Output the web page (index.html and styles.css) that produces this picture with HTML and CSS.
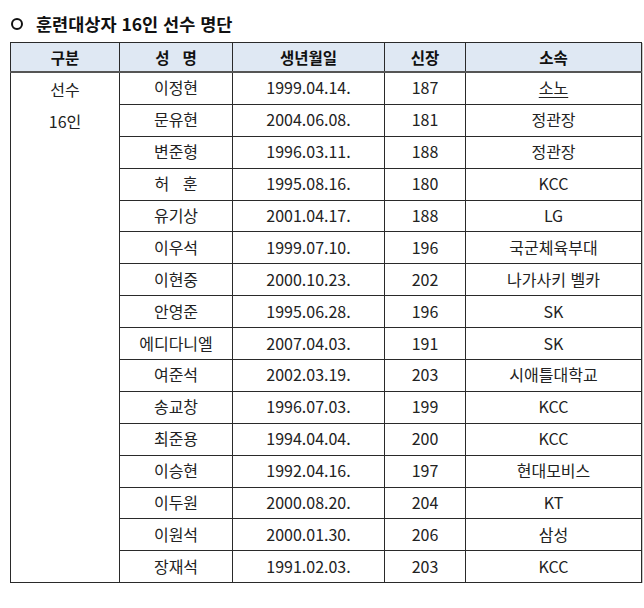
FILE: index.html
```html
<!DOCTYPE html>
<html lang="ko">
<head>
<meta charset="utf-8">
<link rel="stylesheet" href="styles.css">
</head>
<body>
<div class="page">
  <h1 class="title"><span class="bullet"></span>훈련대상자 16인 선수 명단</h1>
  <table class="roster">
    <colgroup>
      <col class="c1"><col class="c2"><col class="c3"><col class="c4"><col class="c5">
    </colgroup>
    <thead>
      <tr><th>구분</th><th>성&nbsp;&nbsp;&nbsp;명</th><th>생년월일</th><th>신장</th><th>소속</th></tr>
    </thead>
    <tbody>
      <tr><td rowspan="16" class="group"><div>선수</div><div>16인</div></td><td>이정현</td><td>1999.04.14.</td><td>187</td><td><span class="ul">소노</span></td></tr>
      <tr><td>문유현</td><td>2004.06.08.</td><td>181</td><td>정관장</td></tr>
      <tr><td>변준형</td><td>1996.03.11.</td><td>188</td><td>정관장</td></tr>
      <tr><td>허&nbsp;&nbsp;&nbsp;훈</td><td>1995.08.16.</td><td>180</td><td>KCC</td></tr>
      <tr><td>유기상</td><td>2001.04.17.</td><td>188</td><td>LG</td></tr>
      <tr><td>이우석</td><td>1999.07.10.</td><td>196</td><td>국군체육부대</td></tr>
      <tr><td>이현중</td><td>2000.10.23.</td><td>202</td><td>나가사키 벨카</td></tr>
      <tr><td>안영준</td><td>1995.06.28.</td><td>196</td><td>SK</td></tr>
      <tr><td>에디다니엘</td><td>2007.04.03.</td><td>191</td><td>SK</td></tr>
      <tr><td>여준석</td><td>2002.03.19.</td><td>203</td><td>시애틀대학교</td></tr>
      <tr><td>송교창</td><td>1996.07.03.</td><td>199</td><td>KCC</td></tr>
      <tr><td>최준용</td><td>1994.04.04.</td><td>200</td><td>KCC</td></tr>
      <tr><td>이승현</td><td>1992.04.16.</td><td>197</td><td>현대모비스</td></tr>
      <tr><td>이두원</td><td>2000.08.20.</td><td>204</td><td>KT</td></tr>
      <tr><td>이원석</td><td>2000.01.30.</td><td>206</td><td>삼성</td></tr>
      <tr><td>장재석</td><td>1991.02.03.</td><td>203</td><td>KCC</td></tr>
    </tbody>
  </table>
</div>
</body>
</html>
```
FILE: styles.css
```css
html, body {
  margin: 0;
  padding: 0;
  background: #fff;
}
.page {
  padding: 12px 0 0 10px;
  font-family: "Noto Sans CJK KR", "Noto Sans", sans-serif;
  color: #222;
}
.title {
  margin: 0 0 7px 0;
  font-size: 17.5px;
  line-height: 23px;
  font-weight: 700;
  color: #111;
  display: flex;
  align-items: center;
}
.bullet {
  width: 8px;
  height: 8px;
  border: 2px solid #111;
  border-radius: 50%;
  margin: 1px 13px 0 1px;
}
.roster {
  border-collapse: collapse;
  width: 631px;
  table-layout: fixed;
  box-shadow: 1px 1px 0 #c8c8c8;
}
.c1 { width: 109px; }
.c2 { width: 113px; }
.c3 { width: 152px; }
.c4 { width: 81px; }
.c5 { width: 176px; }
.roster th, .roster td {
  border: 1px solid #2a2a2a;
  text-align: center;
  padding: 0;
}
.roster th {
  background: #dfe8f3;
  height: 28px;
  font-size: 15.5px;
  font-weight: 700;
  color: #111;
  border-bottom: 2px solid #555;
}
.roster td {
  height: 28.9px;
  line-height: 20px;
  font-size: 16px;
  font-weight: 400;
  color: #222;
  padding-bottom: 2px;
}
.roster td.group {
  vertical-align: top;
  line-height: 32px;
  padding: 0;
}
.ul {
  text-decoration: underline;
  text-underline-offset: 3px;
}
```
